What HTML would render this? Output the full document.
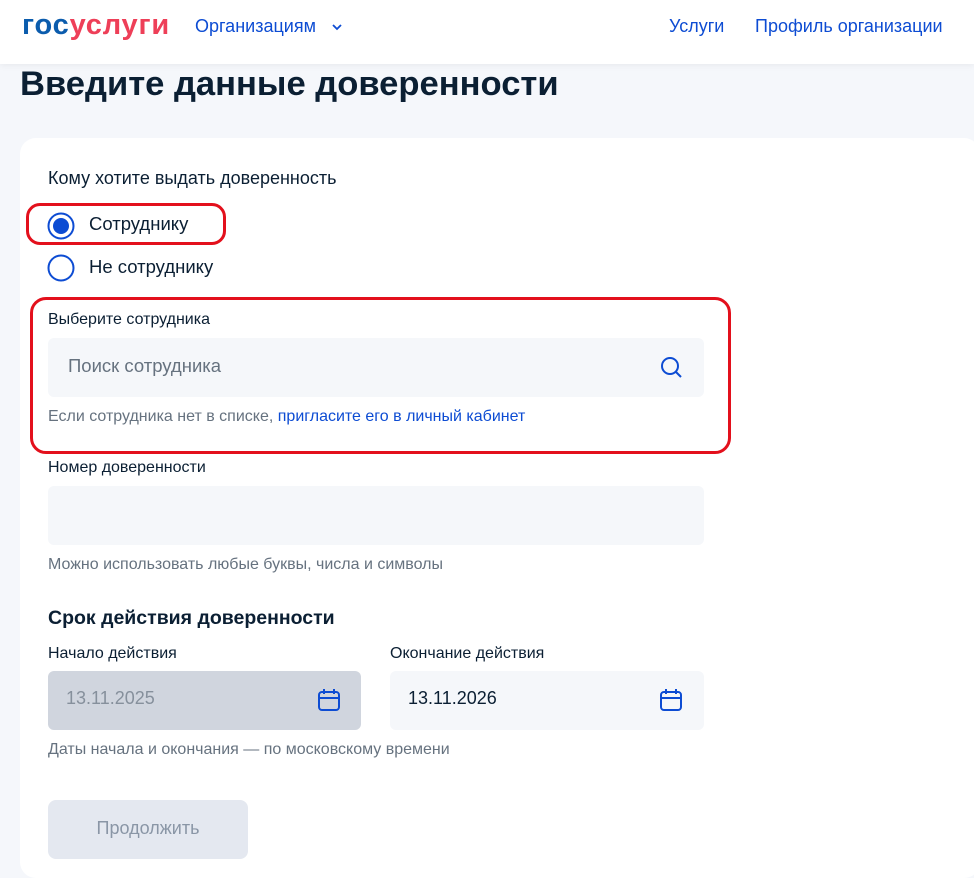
<!DOCTYPE html>
<html><head><meta charset="utf-8"><style>
*{margin:0;padding:0;box-sizing:border-box}
body{width:974px;height:867px;overflow:hidden;background:#f5f7fb;font-family:"Liberation Sans","DejaVu Sans",sans-serif;color:#0b1f33;position:relative}
.a{position:absolute;white-space:nowrap}
.hdr{position:absolute;left:0;top:0;width:974px;height:64px;background:#fff;box-shadow:0 2px 6px rgba(0,0,0,.05)}
.card{position:absolute;left:20px;top:138px;width:960px;height:740px;background:#fff;border-radius:16px}
.inp{position:absolute;background:#f5f7fa;border-radius:6px}
.lbl{font-size:16px;color:#0b1f33}
.hint{font-size:16px;color:#66727f}
.red{position:absolute;border:3px solid #e3101c;border-radius:14px}
</style></head><body>
<div class="hdr"></div>
<div class="a" style="left:22px;top:9px;font-size:29px;font-weight:bold;letter-spacing:0.8px"><span style="color:#0b5cad">гос</span><span style="color:#ee3f58">услуги</span></div>
<div class="a" style="left:195px;top:16px;font-size:18px;color:#0d4cd3">Организациям</div>
<svg class="a" style="left:331px;top:22px" width="12" height="10" viewBox="0 0 12 10"><path d="M2 3l4 4 4-4" fill="none" stroke="#0d4cd3" stroke-width="1.8"/></svg>
<div class="a" style="left:669px;top:16px;font-size:18px;color:#0d4cd3">Услуги</div>
<div class="a" style="left:755px;top:16px;font-size:18px;color:#0d4cd3">Профиль организации</div>
<div class="a" style="left:20px;top:65px;font-size:34.6px;font-weight:bold;color:#0b1f33">Введите данные доверенности</div>
<div class="card"></div>
<div class="a" style="left:48px;top:168px;font-size:18px">Кому хотите выдать доверенность</div>
<svg class="a" style="left:47px;top:212px" width="28" height="28"><circle cx="14" cy="14" r="12.5" fill="none" stroke="#0d4cd3" stroke-width="2"/><circle cx="14" cy="14" r="8" fill="#0d4cd3"/></svg>
<div class="a" style="left:89px;top:213px;font-size:18.5px">Сотруднику</div>
<div class="red" style="left:26px;top:203px;width:200px;height:42px"></div>
<svg class="a" style="left:47px;top:254px" width="28" height="28"><circle cx="14" cy="14" r="12.5" fill="none" stroke="#0d4cd3" stroke-width="2"/></svg>
<div class="a" style="left:89px;top:256px;font-size:18.5px">Не сотруднику</div>
<div class="a lbl" style="left:48px;top:311px">Выберите сотрудника</div>
<div class="inp" style="left:48px;top:338px;width:656px;height:59px"></div>
<div class="a" style="left:68px;top:355px;font-size:18.5px;color:#66727f">Поиск сотрудника</div>
<svg class="a" style="left:659px;top:355px" width="26" height="26" viewBox="0 0 26 26"><circle cx="11" cy="11" r="8" fill="none" stroke="#0d4cd3" stroke-width="2"/><path d="M17 17l5 5" stroke="#0d4cd3" stroke-width="2"/></svg>
<div class="a hint" style="left:48px;top:408px">Если сотрудника нет в списке, <span style="color:#0d4cd3">пригласите его в личный кабинет</span></div>
<div class="red" style="left:30px;top:297px;width:701px;height:157px;border-radius:16px"></div>
<div class="a lbl" style="left:48px;top:459px">Номер доверенности</div>
<div class="inp" style="left:48px;top:486px;width:656px;height:59px"></div>
<div class="a hint" style="left:48px;top:556px">Можно использовать любые буквы, числа и символы</div>
<div class="a" style="left:48px;top:607px;font-size:19.5px;font-weight:bold">Срок действия доверенности</div>
<div class="a lbl" style="left:48px;top:645px">Начало действия</div>
<div class="a lbl" style="left:390px;top:645px">Окончание действия</div>
<div class="inp" style="left:48px;top:671px;width:313px;height:59px;background:#d0d5de"></div>
<div class="a" style="left:66px;top:688px;font-size:18px;color:#86909c">13.11.2025</div>
<div class="inp" style="left:390px;top:671px;width:314px;height:59px"></div>
<div class="a" style="left:408px;top:688px;font-size:18px">13.11.2026</div>
<svg class="a" style="left:318px;top:688px" width="22" height="24" viewBox="0 0 22 24"><rect x="1" y="4" width="20" height="18" rx="3" fill="none" stroke="#0d4cd3" stroke-width="2"/><path d="M1 10h20M6 1v5M16 1v5" stroke="#0d4cd3" stroke-width="2"/></svg>
<svg class="a" style="left:660px;top:688px" width="22" height="24" viewBox="0 0 22 24"><rect x="1" y="4" width="20" height="18" rx="3" fill="none" stroke="#0d4cd3" stroke-width="2"/><path d="M1 10h20M6 1v5M16 1v5" stroke="#0d4cd3" stroke-width="2"/></svg>
<div class="a hint" style="left:48px;top:741px">Даты начала и окончания — по московскому времени</div>
<div class="a" style="left:48px;top:800px;width:200px;height:59px;background:#e4e8f0;border-radius:8px;color:#8a96a6;font-size:18px;text-align:center;line-height:57px">Продолжить</div>
</body></html>
